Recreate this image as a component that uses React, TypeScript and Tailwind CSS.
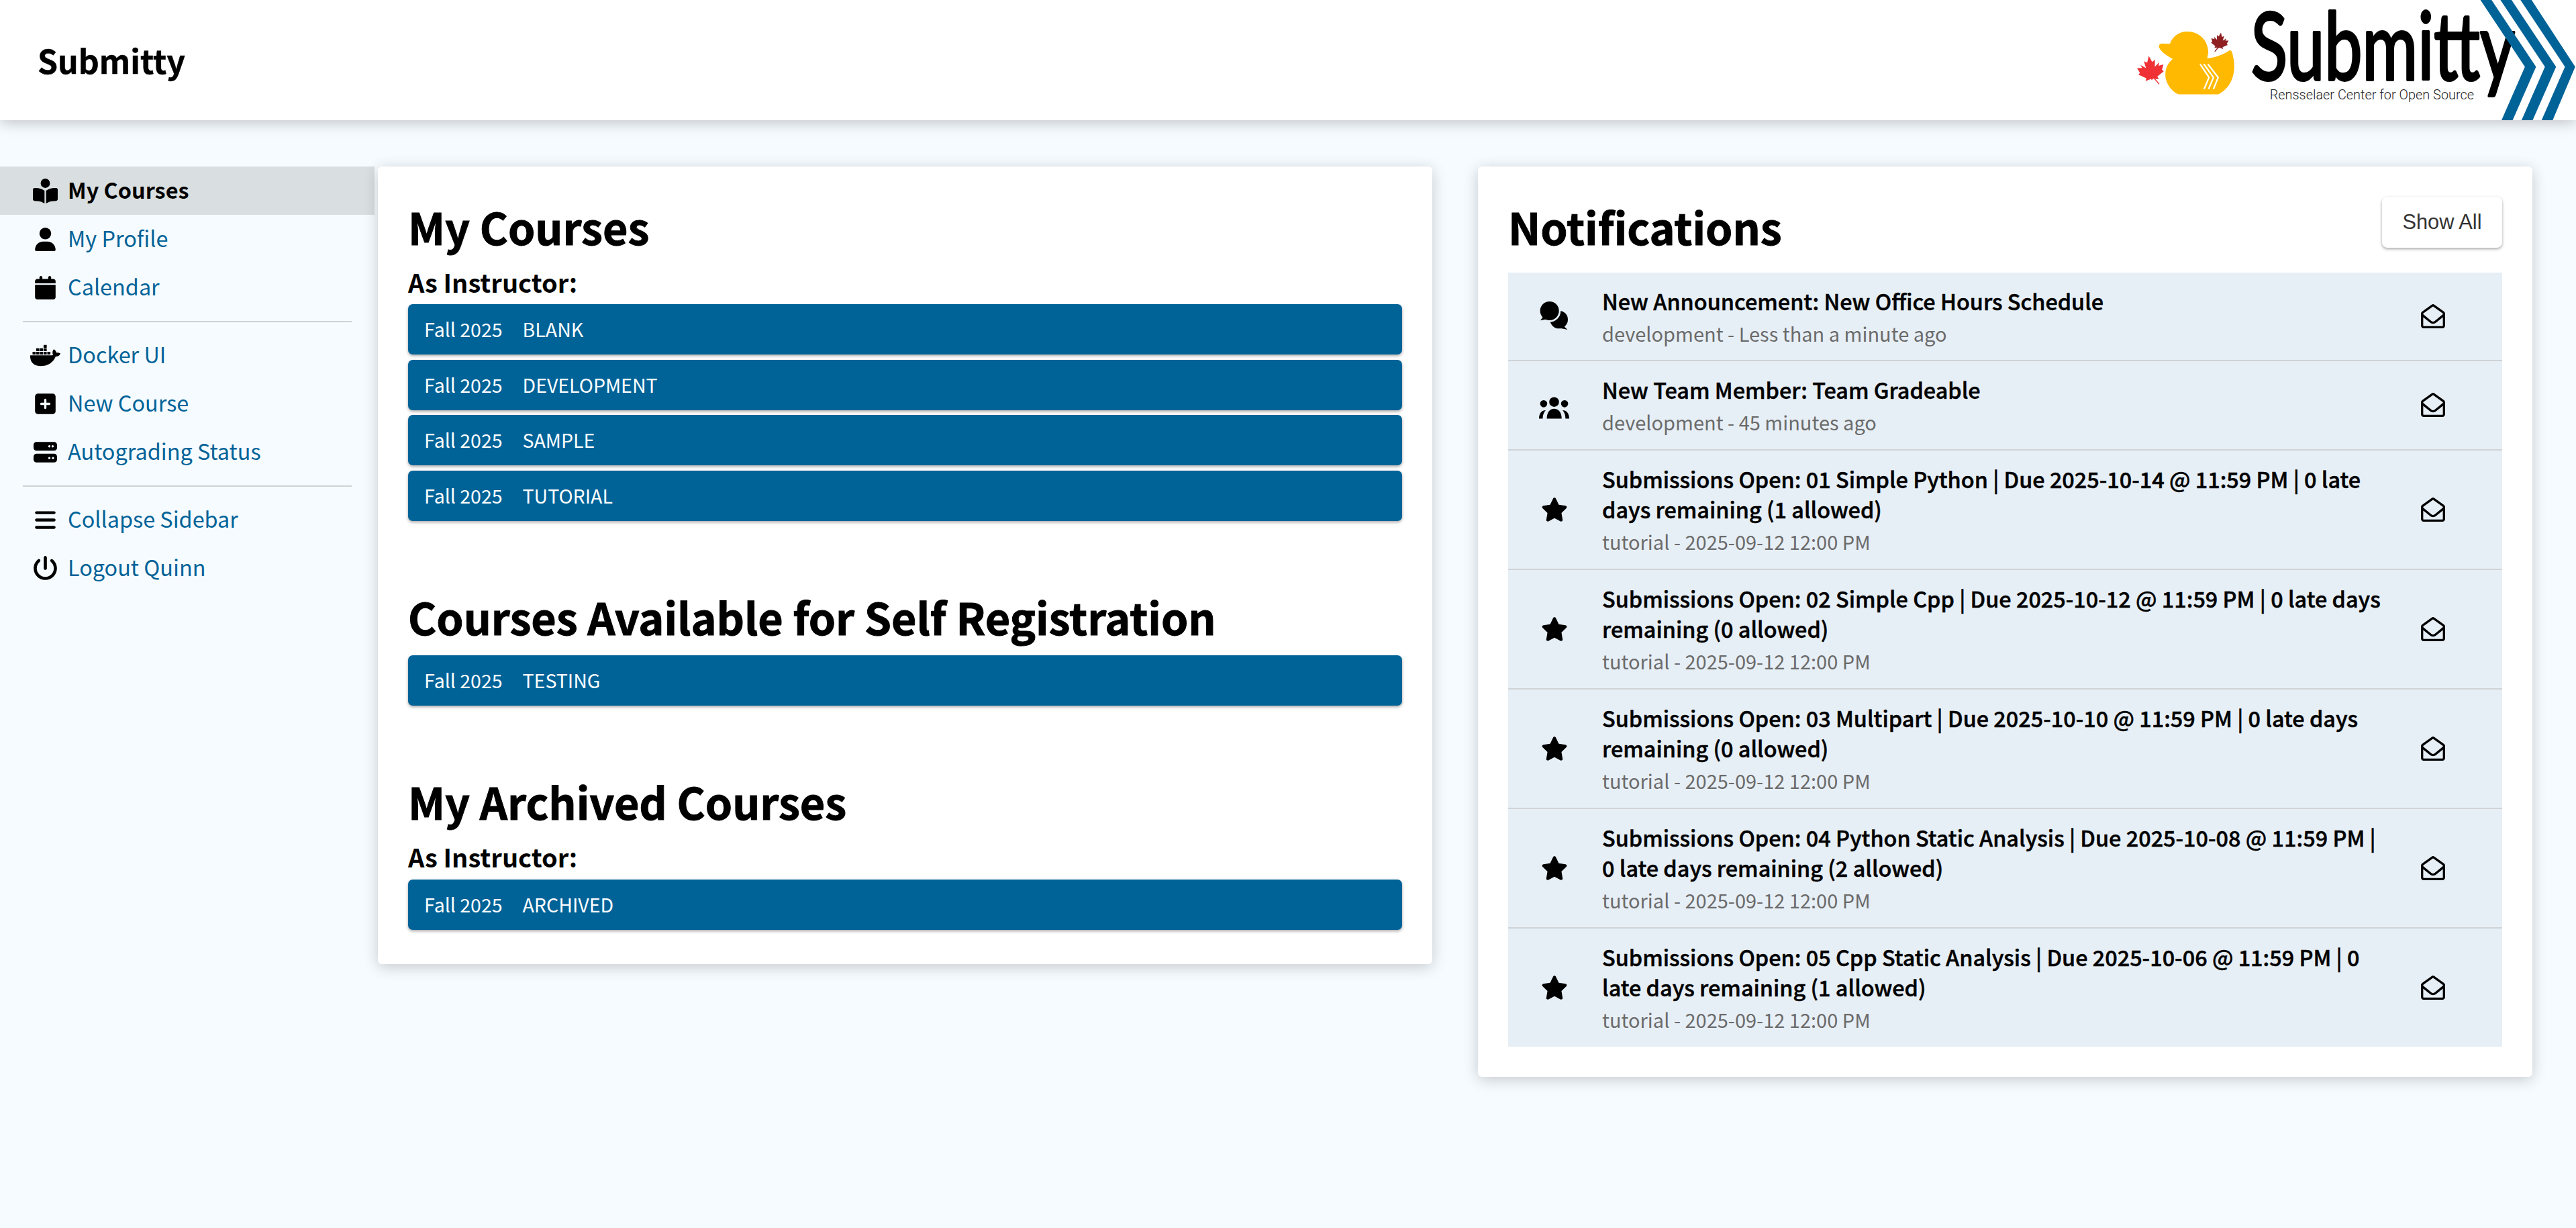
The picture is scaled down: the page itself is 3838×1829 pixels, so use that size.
import React from "react";
import { FaDocker } from "react-icons/fa";
import {
  FaBars,
  FaBookOpenReader,
  FaCalendar,
  FaPowerOff,
  FaRegEnvelopeOpen,
  FaServer,
  FaSquarePlus,
  FaStar,
  FaUser,
} from "react-icons/fa6";

const sans = "font-['Noto_Sans_CJK_SC','Noto_Sans',sans-serif]";

const sidebarGroups = [
  [
    { label: "My Courses", icon: FaBookOpenReader, size: 37, active: true },
    { label: "My Profile", icon: FaUser, size: 35 },
    { label: "Calendar", icon: FaCalendar, size: 35 },
  ],
  [
    { label: "Docker UI", icon: FaDocker, size: 45 },
    { label: "New Course", icon: FaSquarePlus, size: 35 },
    { label: "Autograding Status", icon: FaServer, size: 35 },
  ],
  [
    { label: "Collapse Sidebar", icon: FaBars, size: 35 },
    { label: "Logout Quinn", icon: FaPowerOff, size: 37 },
  ],
];

const notifications = [
  {
    kind: "chat",
    title: "New Announcement: New Office Hours Schedule",
    meta: "development - Less than a minute ago",
  },
  {
    kind: "team",
    title: "New Team Member: Team Gradeable",
    meta: "development - 45 minutes ago",
  },
  {
    kind: "star",
    title:
      "Submissions Open: 01 Simple Python | Due 2025-10-14 @ 11:59 PM | 0 late days remaining (1 allowed)",
    meta: "tutorial - 2025-09-12 12:00 PM",
  },
  {
    kind: "star",
    title:
      "Submissions Open: 02 Simple Cpp | Due 2025-10-12 @ 11:59 PM | 0 late days remaining (0 allowed)",
    meta: "tutorial - 2025-09-12 12:00 PM",
  },
  {
    kind: "star",
    title:
      "Submissions Open: 03 Multipart | Due 2025-10-10 @ 11:59 PM | 0 late days remaining (0 allowed)",
    meta: "tutorial - 2025-09-12 12:00 PM",
  },
  {
    kind: "star",
    title:
      "Submissions Open: 04 Python Static Analysis | Due 2025-10-08 @ 11:59 PM | 0 late days remaining (2 allowed)",
    meta: "tutorial - 2025-09-12 12:00 PM",
  },
  {
    kind: "star",
    title:
      "Submissions Open: 05 Cpp Static Analysis | Due 2025-10-06 @ 11:59 PM | 0 late days remaining (1 allowed)",
    meta: "tutorial - 2025-09-12 12:00 PM",
  },
];

const leaf =
  "M0,-50 L9,-27 L20,-33 L16,-8 L34,-22 L30,-10 L48,-12 L40,6 L46,12 L20,28 L24,38 L3,33 L3,36 L-3,36 L-3,33 L-24,38 L-20,28 L-46,12 L-40,6 L-48,-12 L-30,-10 L-34,-22 L-16,-8 L-20,-33 L-9,-27 Z";

// duck coordinates are in 3x crop space, chevrons too
const Logo = () => (
  <svg viewBox="0 0 658 180" className="w-[658px] h-[179px] shrink-0">
    <g transform="scale(0.3333)">
      <path
        fill="#ffb900"
        d="M232,142 C285,142 325,180 327,235 L322,262 C360,258 395,245 420,228 Q430,222 435,240 C445,280 447,310 437,345 C425,385 400,410 372,424 L195,424 C165,415 135,375 134,340 C133,305 145,285 167,265 C140,250 115,235 105,212 Q103,196 120,195 C135,196 148,198 155,195 C165,165 195,142 232,142 Z"
      />
      <g fill="none" stroke="#fff" strokeWidth="7">
        <path d="M290,288 L330,348 L308,400" />
        <path d="M307,288 L350,348 L328,400" />
        <path d="M325,288 L371,348 L350,400" />
      </g>
      <path fill="#ef3034" transform="translate(68,313) rotate(-8) scale(1.25)" d={leaf} />
      <path d="M82,350 L106,378" stroke="#ef3034" strokeWidth="4" />
      <path fill="#8f2122" transform="translate(378,187) rotate(8) scale(0.82)" d={leaf} />
      <path d="M372,212 L356,232" stroke="#8f2122" strokeWidth="4" />
    </g>
    <text
      x="173"
      y="120"
      fontFamily="Lato, sans-serif"
      fontSize="140"
      fill="#000"
      stroke="#000"
      strokeWidth="4"
      strokeLinejoin="round"
      textLength="395"
      lengthAdjust="spacingAndGlyphs"
    >
      Submitty
    </text>
    <text x="201" y="149" fontFamily="Roboto, sans-serif" fontWeight="300" fontSize="20" fill="#222" textLength="306">
      Rensselaer Center for Open Source
    </text>
    <g transform="translate(320,0) scale(0.3333)" fill="#006398">
      <path d="M590,0 L640,0 L840,300 L735,540 L685,540 L790,300 Z" />
      <path d="M680,0 L730,0 L930,300 L825,540 L775,540 L880,300 Z" />
      <path d="M770,0 L820,0 L1016,300 L915,540 L865,540 L970,300 Z" />
    </g>
  </svg>
);

const ChatIcon = () => (
  <svg viewBox="60 50 150 150" className="w-[50px] h-[50px]">
    <circle cx="155" cy="140" r="40" fill="#000" />
    <path d="M172,165 L193,185 L160,178 Z" fill="#000" />
    <circle cx="113" cy="101" r="50" fill="#e7eff6" />
    <circle cx="113" cy="101" r="42" fill="#000" />
    <path d="M84,128 L72,144 L102,138 Z" fill="#000" />
  </svg>
);

const TeamIcon = () => (
  <svg viewBox="20 40 166 120" className="w-[55px] h-[40px] mt-[8px]">
    <circle cx="56" cy="83" r="16" />
    <circle cx="103" cy="75" r="22" />
    <circle cx="150" cy="83" r="16" />
    <path d="M70,150 C70,120 85,105 103,105 C121,105 137,120 137,150 Z" />
    <path d="M35,150 C35,125 48,112 65,112 C55,125 52,135 52,150 Z" />
    <path d="M171,150 C171,125 158,112 141,112 C151,125 154,135 154,150 Z" />
  </svg>
);

const CourseButton = ({ name }: { name: string }) => (
  <div className="h-[75px] flex items-center gap-[30px] px-[24px] bg-[#006398] rounded-[7px] shadow-[0_2px_4px_rgba(0,0,0,0.35)] text-white text-[28.5px] leading-none">
    <span>Fall 2025</span>
    <span>{name}</span>
  </div>
);

const SectionTitle = ({ children, className }: { children: React.ReactNode; className?: string }) => (
  <h2 className={`font-bold [-webkit-text-stroke:1px_black] text-[64.5px] leading-[84px] text-black ${className ?? ""}`}>
    {children}
  </h2>
);

const Role = ({ className }: { className: string }) => (
  <h3 className={`font-bold text-[38px] leading-[44px] text-black ${className}`}>As Instructor:</h3>
);

export default function App() {
  return (
    <div className={`${sans} min-h-[1829px] bg-[#f6fbff] flex flex-col`}>
      <header className="h-[179px] bg-white flex items-center justify-between pl-[56px] shadow-[0_4px_20px_rgba(0,0,0,0.22)] relative z-10">
        <span className="font-bold [-webkit-text-stroke:0.5px_black] text-[48.2px] leading-none text-black">Submitty</span>
        <Logo />
      </header>

      <div className="flex pt-[69px] items-start">
        <nav className="w-[558px] shrink-0">
          {sidebarGroups.map((group, i) => (
            <div key={i} className={i > 0 ? "mx-[34px] border-t-2 border-[#cfd3d6] -mt-px pt-[13px] mb-[15px]" : "mb-[15px]"}>
              {group.map((item) => {
                const Icon = item.icon;
                return (
                  <a
                    key={item.label}
                    className={`h-[72px] flex items-center text-[32.4px] ${
                      i > 0 ? "-mx-[34px]" : ""
                    } ${item.active ? "bg-[#d9dfe0] font-bold text-black" : "text-[#006398]"}`}
                  >
                    <span className="w-[101px] pl-[34px] flex justify-center shrink-0 text-black">
                      <Icon size={item.size} />
                    </span>
                    <span className="pb-[4px]">{item.label}</span>
                  </a>
                );
              })}
            </div>
          ))}
        </nav>

        <main className="w-[1571px] ml-[5px] bg-white rounded-[6px] px-[45px] pt-[47px] pb-[51px] shadow-[0_4px_22px_rgba(0,0,0,0.2)]">
          <SectionTitle>My Courses</SectionTitle>
          <Role className="mt-[19px]" />
          <div className="mt-[11px] flex flex-col gap-[7.6px]">
            {["BLANK", "DEVELOPMENT", "SAMPLE", "TUTORIAL"].map((name) => (
              <CourseButton key={name} name={name} />
            ))}
          </div>
          <SectionTitle className="mt-[100px]">Courses Available for Self Registration</SectionTitle>
          <div className="mt-[16px]">
            <CourseButton name="TESTING" />
          </div>
          <SectionTitle className="mt-[100px]">My Archived Courses</SectionTitle>
          <Role className="mt-[19px]" />
          <div className="mt-[12px]">
            <CourseButton name="ARCHIVED" />
          </div>
        </main>

        <aside className="w-[1571px] ml-[68px] bg-white rounded-[6px] px-[45px] pt-[45px] pb-[45px] shadow-[0_4px_22px_rgba(0,0,0,0.2)]">
          <div className="flex items-start justify-between">
            <SectionTitle className="mt-[2px]">Notifications</SectionTitle>
            <button className="w-[179px] h-[76px] bg-white rounded-[8px] shadow-[0_2px_4px_rgba(0,0,0,0.35)] font-['Liberation_Sans',sans-serif] text-[30.8px] text-[#333]">
              Show All
            </button>
          </div>
          <div className="mt-[27px]">
            {notifications.map((n, i) => (
              <div
                key={i}
                className={`flex items-center bg-[#e7eff6] ${
                  i < notifications.length - 1 ? "border-b-2 border-[#d0d3d6]" : ""
                }`}
              >
                <span className="w-[140px] pr-[3px] flex justify-center shrink-0 text-black">
                  {n.kind === "chat" && <ChatIcon />}
                  {n.kind === "team" && <TeamIcon />}
                  {n.kind === "star" && <FaStar size={40} />}
                </span>
                <div className="w-[1168px] shrink-0 pt-[19px] pb-[20.5px]">
                  <p className="font-medium [-webkit-text-stroke:0.5px_black] text-[32.4px] leading-[45.76px] text-black">{n.title}</p>
                  <p className="mt-[5px] text-[29px] leading-[40px] text-[#6b6b6b]">{n.meta}</p>
                </div>
                <span className="flex-1 flex justify-center pr-[34px]">
                  <FaRegEnvelopeOpen size={36} className="text-black" />
                </span>
              </div>
            ))}
          </div>
        </aside>
      </div>
    </div>
  );
}
